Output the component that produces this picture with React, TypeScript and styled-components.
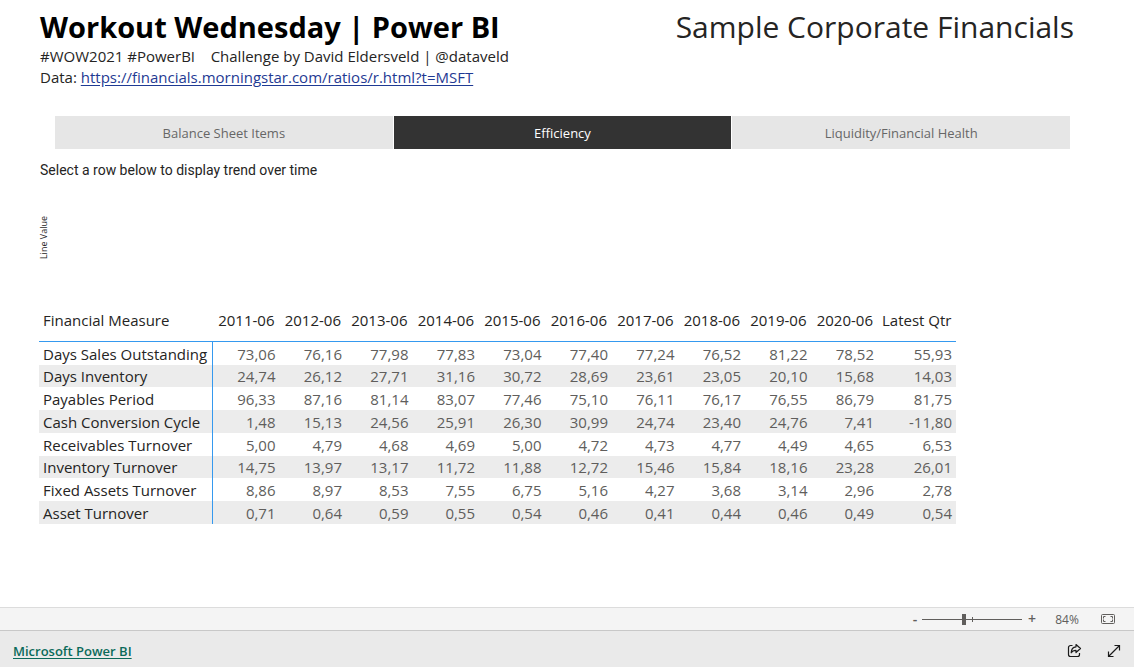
import React, { useState } from "react";
import styled, { createGlobalStyle } from "styled-components";

const GlobalStyle = createGlobalStyle`
  *, *::before, *::after { box-sizing: border-box; }
  body {
    margin: 0;
    background: #ffffff;
    color: #252423;
    font-family: "Segoe UI", "Open Sans", "Noto Sans", sans-serif;
  }
`;

const Page = styled.div`
  display: flex;
  flex-direction: column;
  min-height: 100vh;
`;

const Report = styled.main`
  flex: 1;
  padding: 8px 60px 40px 39px;
`;

const Header = styled.header`
  display: flex;
  justify-content: space-between;
  align-items: flex-start;
  padding-left: 1px;
`;

const Title = styled.h1`
  margin: 0;
  font-size: 29px;
  line-height: 38px;
  font-weight: 700;
  color: #000000;
`;

const Detail = styled.p`
  margin: 0;
  font-size: 15px;
  line-height: 21px;
  white-space: pre-wrap;
`;

const DataLink = styled.a`
  color: #1f3a93;
  text-decoration: underline;
  text-underline-offset: 2px;
`;

const Subtitle = styled.h2`
  margin: 0;
  font-size: 30px;
  line-height: 38px;
  font-weight: 400;
  white-space: nowrap;
`;

const Tabs = styled.div`
  display: grid;
  grid-template-columns: repeat(3, 1fr);
  gap: 1px;
  margin: 28px 4px 0 16px;
`;

const Tab = styled.button<{ $active: boolean }>`
  height: 33px;
  padding: 1px 0 0;
  border: 0;
  background: ${(p) => (p.$active ? "#333333" : "#e6e6e6")};
  color: ${(p) => (p.$active ? "#ffffff" : "#666666")};
  font: 400 13px/32px "Segoe UI", "Open Sans", "Noto Sans", sans-serif;
  cursor: pointer;
`;

const Hint = styled.p`
  margin: 11px 0 0;
  padding-left: 1px;
  font: 400 14px/20px "DIN", Roboto, sans-serif;
`;

const Trend = styled.section`
  display: flex;
  align-items: center;
  height: 115px;
`;

const AxisTitle = styled.span`
  writing-mode: vertical-rl;
  transform: rotate(180deg);
  font-size: 9px;
  line-height: 10px;
`;

const Matrix = styled.table`
  width: 100%;
  max-width: 917px;
  margin-top: 8px;
  table-layout: fixed;
  border-collapse: separate;
  border-spacing: 0;
  font-size: 15px;
  line-height: 22px;
`;

const MeasureCol = styled.col`
  width: 174px;
`;

const LatestCol = styled.col`
  width: 78px;
`;

const ColumnHead = styled.th<{ $first?: boolean }>`
  height: 39px;
  padding: 6px 5px 0 4px;
  border-bottom: 1px solid #3599ef;
  font-weight: 400;
  text-align: ${(p) => (p.$first ? "left" : "right")};
  vertical-align: top;
  white-space: nowrap;
`;

const Row = styled.tr`
  height: 23px;
  &:nth-child(4n + 2) { height: 22px; }
  &:nth-child(even) { background: #ececec; }
`;

const Measure = styled.th`
  padding: 0 4px;
  border-right: 1px solid #3599ef;
  font-weight: 400;
  text-align: left;
  white-space: nowrap;
`;

const Value = styled.td`
  padding: 0 4px;
  color: #605e5c;
  text-align: right;
`;

const ZoomBar = styled.div`
  display: flex;
  justify-content: flex-end;
  align-items: center;
  height: 23px;
  padding-right: 18px;
  border-top: 1px solid #dcdcdc;
  background: #f4f4f4;
  color: #605e5c;
  font-size: 12px;
`;

const ZoomStep = styled.button`
  width: 20px;
  padding: 0;
  border: 0;
  background: none;
  color: inherit;
  font: 600 14px/20px "Segoe UI", "Open Sans", sans-serif;
  cursor: pointer;
`;

const ZoomOut = styled(ZoomStep)`
  width: 14px;
`;

const ZoomSlider = styled.input`
  appearance: none;
  width: 100px;
  height: 11px;
  margin: 0;
  background:
    linear-gradient(#605e5c, #605e5c) 50px 50% / 1px 5px no-repeat,
    linear-gradient(#605e5c, #605e5c) 0 50% / 100% 1px no-repeat;
  &::-webkit-slider-thumb {
    appearance: none;
    width: 4px;
    height: 11px;
    border-radius: 0;
    background: #605e5c;
  }
`;

const ZoomValue = styled.output`
  width: 50px;
  text-align: center;
`;

const IconButton = styled.button`
  display: flex;
  padding: 0;
  border: 0;
  background: none;
  color: inherit;
  cursor: pointer;
`;

const FitButton = styled(IconButton)`
  margin-left: 8px;
`;

const Footer = styled.footer`
  display: flex;
  justify-content: space-between;
  align-items: center;
  height: 37px;
  padding: 4px 12px 0 13px;
  border-top: 1px solid #c8c8c8;
  background: #eaeaea;
  color: #1b1b1b;
`;

const BrandLink = styled.a`
  color: #0b6a5a;
  font-size: 13px;
  font-weight: 600;
  line-height: 20px;
  text-decoration: underline;
  text-underline-offset: 2px;
`;

const Actions = styled.div`
  display: flex;
  gap: 24px;
`;

const tabs = ["Balance Sheet Items", "Efficiency", "Liquidity/Financial Health"];

const columns = [
  "2011-06", "2012-06", "2013-06", "2014-06", "2015-06", "2016-06",
  "2017-06", "2018-06", "2019-06", "2020-06", "Latest Qtr",
];

const rows: [string, string[]][] = [
  ["Days Sales Outstanding", ["73,06", "76,16", "77,98", "77,83", "73,04", "77,40", "77,24", "76,52", "81,22", "78,52", "55,93"]],
  ["Days Inventory", ["24,74", "26,12", "27,71", "31,16", "30,72", "28,69", "23,61", "23,05", "20,10", "15,68", "14,03"]],
  ["Payables Period", ["96,33", "87,16", "81,14", "83,07", "77,46", "75,10", "76,11", "76,17", "76,55", "86,79", "81,75"]],
  ["Cash Conversion Cycle", ["1,48", "15,13", "24,56", "25,91", "26,30", "30,99", "24,74", "23,40", "24,76", "7,41", "-11,80"]],
  ["Receivables Turnover", ["5,00", "4,79", "4,68", "4,69", "5,00", "4,72", "4,73", "4,77", "4,49", "4,65", "6,53"]],
  ["Inventory Turnover", ["14,75", "13,97", "13,17", "11,72", "11,88", "12,72", "15,46", "15,84", "18,16", "23,28", "26,01"]],
  ["Fixed Assets Turnover", ["8,86", "8,97", "8,53", "7,55", "6,75", "5,16", "4,27", "3,68", "3,14", "2,96", "2,78"]],
  ["Asset Turnover", ["0,71", "0,64", "0,59", "0,55", "0,54", "0,46", "0,41", "0,44", "0,46", "0,49", "0,54"]],
];

const FitIcon = () => (
  <svg width="16" height="12" viewBox="0 0 16 12" fill="none" stroke="#605e5c">
    <rect x="1.5" y="1.5" width="13" height="9" rx="1" />
    <path d="M5.5 3.5h-2v2M3.5 6.5v2h2M10.5 3.5h2v2M12.5 6.5v2h-2" />
  </svg>
);

const ShareIcon = () => (
  <svg width="16" height="16" viewBox="0 0 16 16" fill="none" stroke="currentColor" strokeLinejoin="round">
    <path d="M6.5 2.5h-2a2 2 0 0 0-2 2v7a2 2 0 0 0 2 2h7a2 2 0 0 0 2-2v-1.500" strokeWidth="1.200" />
    <path d="M10 1.500 14.500 5.500 10 9.500V7.300C7.800 7.300 6.200 8 5.200 9.800 5.300 6.500 7 4 10 3.800Z" strokeWidth="1.200" />
  </svg>
);

const ExpandIcon = () => (
  <svg width="16" height="16" viewBox="0 0 16 16" fill="none" stroke="currentColor" strokeWidth="1.2">
    <path d="M2.500 13.500 13.500 2.500M8.500 2.500h5v5M2.500 8.500v5h5" />
  </svg>
);

export default function App() {
  const [active, setActive] = useState(1);
  const [zoom, setZoom] = useState(84);

  return (
    <>
      <GlobalStyle />
      <Page>
        <Report>
          <Header>
            <div>
              <Title>Workout Wednesday | Power BI</Title>
              <Detail>{"#WOW2021 #PowerBI    Challenge by David Eldersveld | @dataveld"}</Detail>
              <Detail>
                Data:{" "}
                <DataLink href="https://financials.morningstar.com/ratios/r.html?t=MSFT">
                  https://financials.morningstar.com/ratios/r.html?t=MSFT
                </DataLink>
              </Detail>
            </div>
            <Subtitle>Sample Corporate Financials</Subtitle>
          </Header>
          <Tabs role="tablist">
            {tabs.map((label, i) => (
              <Tab key={label} type="button" role="tab" aria-selected={i === active} $active={i === active} onClick={() => setActive(i)}>
                {label}
              </Tab>
            ))}
          </Tabs>
          <Hint>Select a row below to display trend over time</Hint>
          <Trend>
            <AxisTitle>Line Value</AxisTitle>
          </Trend>
          <Matrix>
            <colgroup>
              <MeasureCol />
              <col span={10} />
              <LatestCol />
            </colgroup>
            <thead>
              <tr>
                <ColumnHead $first scope="col">Financial Measure</ColumnHead>
                {columns.map((c) => (
                  <ColumnHead key={c} scope="col">{c}</ColumnHead>
                ))}
              </tr>
            </thead>
            <tbody>
              {rows.map(([name, values]) => (
                <Row key={name}>
                  <Measure scope="row">{name}</Measure>
                  {values.map((v, i) => (
                    <Value key={columns[i]}>{v}</Value>
                  ))}
                </Row>
              ))}
            </tbody>
          </Matrix>
        </Report>
        <ZoomBar>
          <ZoomOut type="button" aria-label="Zoom out" onClick={() => setZoom(Math.max(10, zoom - 10))}>-</ZoomOut>
          <ZoomSlider
            type="range"
            aria-label="Zoom"
            min={0}
            max={200}
            value={zoom}
            onChange={(e) => setZoom(Number(e.target.value))}
          />
          <ZoomStep type="button" aria-label="Zoom in" onClick={() => setZoom(Math.min(200, zoom + 10))}>+</ZoomStep>
          <ZoomValue>{zoom}%</ZoomValue>
          <FitButton type="button" aria-label="Fit to page"><FitIcon /></FitButton>
        </ZoomBar>
        <Footer>
          <BrandLink href="https://powerbi.microsoft.com">Microsoft Power BI</BrandLink>
          <Actions>
            <IconButton type="button" aria-label="Share"><ShareIcon /></IconButton>
            <IconButton type="button" aria-label="Full screen"><ExpandIcon /></IconButton>
          </Actions>
        </Footer>
      </Page>
    </>
  );
}
